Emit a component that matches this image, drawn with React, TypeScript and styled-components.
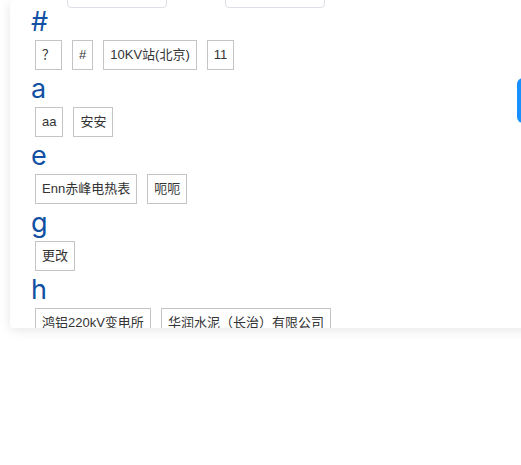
import React, { useLayoutEffect, useRef } from "react";
import styled, { createGlobalStyle } from "styled-components";

const GlobalStyle = createGlobalStyle`
  html, body {
    margin: 0;
    padding: 0;
    background: #ffffff;
    overflow: hidden;
  }
  * { box-sizing: border-box; }
`;

const Page = styled.div`
  width: 100%;
  height: 465px;
  padding-left: 10px;
  overflow: hidden;
`;

const Panel = styled.div`
  width: calc(100% + 40px);
  height: 328px;
  background: #ffffff;
  border-radius: 4px;
  box-shadow: 0 2px 12px rgba(0, 0, 0, 0.1);
  overflow-y: auto;
  scrollbar-width: none;
  &::-webkit-scrollbar { display: none; }
`;

const Inner = styled.div`
  padding: 20px 0 20px 21px;
  font-family: "Liberation Sans", "Noto Sans CJK SC", sans-serif;
`;

const FilterRow = styled.div`
  display: flex;
  align-items: center;
  height: 32px;
`;

const Label = styled.label<{ $w: number }>`
  width: ${(p) => p.$w}px;
  font-size: 14px;
  color: #606266;
  white-space: nowrap;
  line-height: 14px;
  align-self: flex-start;
`;

const Input = styled.input`
  width: 100px;
  height: 32px;
  padding: 0 15px;
  border: 1px solid #dcdfe6;
  border-radius: 4px;
  font-size: 14px;
  font-family: "Liberation Sans", "Noto Sans CJK SC", sans-serif;
  color: #606266;
  outline: none;
  &::placeholder { color: #c0c4cc; }
`;

const IndexList = styled.div`
  display: flex;
  flex-direction: column;
  gap: 5px;
`;

const Section = styled.section`
  display: flex;
  flex-direction: column;
  gap: 4px;
`;

const Heading = styled.h3`
  margin: 0;
  font-family: Inter, "Liberation Sans", sans-serif;
  font-weight: 400;
  font-size: 27px;
  line-height: 28px;
  color: #1150a3;
`;

const TagRow = styled.div`
  display: flex;
  flex-wrap: wrap;
  gap: 10px;
  padding-left: 4px;
`;

const Tag = styled.span`
  display: inline-block;
  height: 30px;
  padding: 0 6px;
  border: 1px solid #c4c4c4;
  font-size: 13px;
  line-height: 28px;
  color: #333333;
  white-space: nowrap;
`;

const SideTab = styled.div`
  position: fixed;
  top: 78px;
  right: -16px;
  width: 20px;
  height: 45px;
  background: #1890ff;
  border-radius: 6px 0 0 6px;
`;

const groups: { key: string; items: string[] }[] = [
  { key: "#", items: ["？", "#", "10KV站(北京)", "11"] },
  { key: "a", items: ["aa", "安安"] },
  { key: "e", items: ["Enn赤峰电热表", "呃呃"] },
  { key: "g", items: ["更改"] },
  { key: "h", items: ["鸿铝220kV变电所", "华润水泥（长治）有限公司"] },
  { key: "j", items: ["金山变电站", "晋城热电"] },
  { key: "s", items: ["山西电力", "水务集团"] },
];

export default function App() {
  const panelRef = useRef<HTMLDivElement>(null);
  useLayoutEffect(() => {
    if (panelRef.current) panelRef.current.scrollTop = 44;
  }, []);
  return (
    <Page>
      <GlobalStyle />
      <Panel ref={panelRef}>
        <Inner>
          <FilterRow>
            <Label $w={36}>名称</Label>
            <Input placeholder="请输入" />
            <Label $w={58} style={{ paddingLeft: 14 }}>
              类型
            </Label>
            <Input placeholder="请选择" />
          </FilterRow>
          <IndexList>
            {groups.map((g) => (
              <Section key={g.key}>
                <Heading>{g.key}</Heading>
                <TagRow>
                  {g.items.map((t) => (
                    <Tag key={t}>{t}</Tag>
                  ))}
                </TagRow>
              </Section>
            ))}
          </IndexList>
        </Inner>
      </Panel>
      <SideTab />
    </Page>
  );
}
